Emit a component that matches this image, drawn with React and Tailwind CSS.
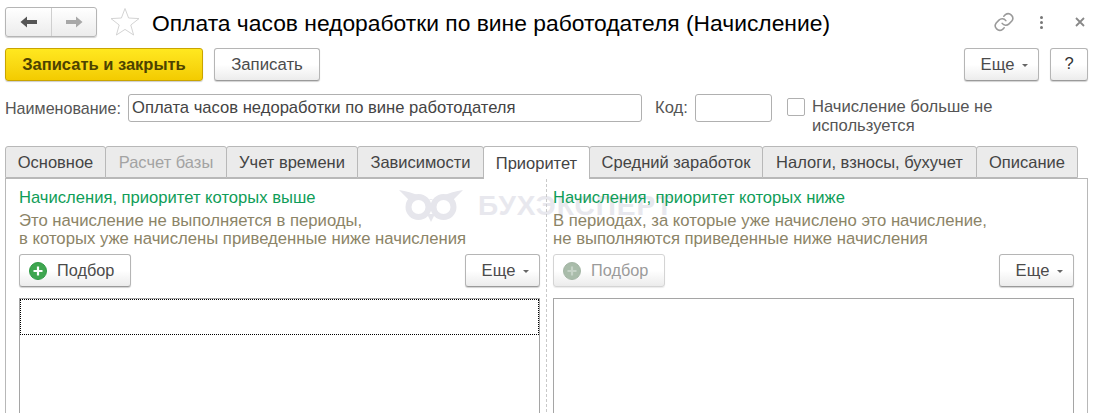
import React from "react";

const btn = "flex items-center justify-center rounded-[3px] border border-[#b5b5b5] border-b-[#9a9a9a] bg-gradient-to-b from-white via-white to-[#ececec] shadow-[0_1px_1px_rgba(0,0,0,0.18)] text-[#4b4b4b]";

function Caret() {
  return <span className="ml-[8px] mt-[1px] h-0 w-0 border-x-[3px] border-t-[3px] border-x-transparent border-t-[#666]" />;
}

function More({ className = "" }) {
  return (
    <div className={`${btn} h-[33px] w-[75px] pl-[6px] pt-[1px] text-[16.6px] ${className}`}>
      Еще
      <Caret />
    </div>
  );
}

function Plus({ disabled }) {
  return (
    <svg width="18" height="18" viewBox="0 0 18 18" className="shrink-0">
      <circle cx="9" cy="9" r="8.5" fill={disabled ? "#a9bcaa" : "#3fa650"} stroke={disabled ? "#a3b5a4" : "#2f9a45"} />
      <path d="M9 4.5v9M4.5 9h9" stroke={disabled ? "#c6d3c7" : "#fff"} strokeWidth="2.2" />
    </svg>
  );
}

function Pick({ disabled }) {
  return (
    <div
      className={`flex h-[33px] w-[112px] items-center gap-[10px] rounded-[3px] border pl-[9px] text-[16.3px] bg-gradient-to-b from-white via-white to-[#ececec] ${
        disabled
          ? "border-[#d4d4d4] text-[#9b9b9b] shadow-[0_1px_1px_rgba(0,0,0,0.08)]"
          : "border-[#b5b5b5] border-b-[#9a9a9a] text-[#4b4b4b] shadow-[0_1px_1px_rgba(0,0,0,0.18)]"
      }`}
    >
      <Plus disabled={disabled} />
      Подбор
    </div>
  );
}

const tabs = [
  ["Основное", 101],
  ["Расчет базы", 122, "disabled"],
  ["Учет времени", 132],
  ["Зависимости", 127],
  ["Приоритет", 107, "active"],
  ["Средний заработок", 174],
  ["Налоги, взносы, бухучет", 215],
  ["Описание", 102],
];

function Column({ title, lines, disabled, focused, right }) {
  return (
    <div className={`flex min-w-0 flex-col ${right ? "w-[534px] pl-[6px]" : "w-[540px] pl-[13px]"} pt-[9px]`}>
      <div className="h-[20px] text-[16.6px] leading-[20px] text-[#0f9d58]">{title}</div>
      <div className="mt-[4px] text-[16.7px] leading-[18px] text-[#8c8467]">
        {lines.map((l) => (
          <div key={l} className="whitespace-nowrap">{l}</div>
        ))}
      </div>
      <div className="mt-[6px] flex w-[521px] justify-between">
        <Pick disabled={disabled} />
        <More />
      </div>
      <div className="mt-[11px] h-[200px] w-[521px] border border-[#a5a5a5] bg-white">
        {focused && <div className="h-[36px] border border-dotted border-black" />}
      </div>
    </div>
  );
}

export default function App() {
  return (
    <div className="h-[413px] w-[1094px] overflow-hidden bg-white font-['Liberation_Sans',Arial,sans-serif] text-[#333]">
      <div className="flex h-[48px] items-start pl-[5px] pt-[7px] pr-[6px]">
        <div className="flex h-[30px] w-[92px] rounded-[3px] border border-[#b5b5b5] bg-gradient-to-b from-white to-[#ececec] shadow-[0_1px_1px_rgba(0,0,0,0.18)]">
          <div className="flex w-[46px] items-center justify-center border-r border-[#cfcfcf]">
            <svg width="18" height="14" viewBox="0 0 18 14"><path d="M0.5 7 7 1.5V5h10v4H7v3.5z" fill="#555" /></svg>
          </div>
          <div className="flex flex-1 items-center justify-center">
            <svg width="18" height="14" viewBox="0 0 18 14"><path d="M17.5 7 11 1.5V5H1v4h10v3.5z" fill="#a8a8a8" /></svg>
          </div>
        </div>
        <svg width="30" height="30" viewBox="0 0 30 30" className="ml-[13px]">
          <path d="M15 1.5 18.6 11 29 11.6 20.8 18 23.6 28 15 22.4 6.4 28 9.2 18 1 11.6 11.4 11z" fill="#fff" stroke="#d4d4d4" />
        </svg>
        <div className="ml-[12px] mt-[1px] whitespace-nowrap text-[22.83px] leading-[30px] text-black">
          Оплата часов недоработки по вине работодателя (Начисление)
        </div>
        <div className="ml-auto flex items-center pt-[4px]">
          <svg width="22" height="22" viewBox="0 0 24 24" fill="none" stroke="#9a9a9a" strokeWidth="1.7" strokeLinecap="round">
            <path d="M10 13.5a5 5 0 0 0 7.5.5l3-3a5 5 0 0 0-7-7l-1.7 1.7" />
            <path d="M14 10.5a5 5 0 0 0-7.5-.5l-3 3a5 5 0 0 0 7 7l1.7-1.7" />
          </svg>
          <div className="ml-[25px] flex flex-col gap-[2px]">
            <span className="h-[3px] w-[3px] rounded-full bg-[#777]" />
            <span className="h-[3px] w-[3px] rounded-full bg-[#777]" />
            <span className="h-[3px] w-[3px] rounded-full bg-[#777]" />
          </div>
          <svg width="10" height="10" viewBox="0 0 10 10" className="ml-[32px] mr-[3px]">
            <path d="M1 1l8 8M9 1l-8 8" stroke="#888" strokeWidth="1.8" />
          </svg>
        </div>
      </div>

      <div className="flex h-[33px] pl-[5px] pr-[6px]">
        <div className="flex w-[198px] items-center justify-center rounded-[3px] border border-[#c9a400] bg-gradient-to-b from-[#ffe81f] to-[#f3cb00] text-[16.5px] font-bold text-[#4d4300] shadow-[0_1px_1px_rgba(0,0,0,0.2)]">
          Записать и закрыть
        </div>
        <div className={`${btn} ml-[11px] w-[106px] text-[16.8px]`}>Записать</div>
        <More className="ml-auto" />
        <div className={`${btn} ml-[11px] h-[33px] w-[38px] text-[16.6px] text-[#333]`}>?</div>
      </div>

      <div className="mt-[13px] flex h-[52px] items-start pl-[5px] text-[16.6px]">
        <span className="mt-[4px] w-[123px] whitespace-nowrap text-[16.1px] leading-[20px] text-[#555]">Наименование:</span>
        <div className="flex h-[28px] w-[514px] items-center rounded-[3px] border border-[#b0b0b0] pl-[3px] text-[#444]">
          Оплата часов недоработки по вине работодателя
        </div>
        <span className="ml-[13px] mt-[4px] w-[40px] leading-[20px] text-[#555]">Код:</span>
        <div className="h-[28px] w-[77px] rounded-[3px] border border-[#b0b0b0]" />
        <div className="ml-[15px] mt-[4px] h-[18px] w-[18px] rounded-[2px] border border-[#b0b0b0]" />
        <div className="ml-[7px] mt-[3px] w-[240px] text-[16.6px] leading-[19px] text-[#555]">
          Начисление больше не используется
        </div>
      </div>

      <div className="flex h-[32px] pl-[5px]">
        {tabs.map(([label, w, state]) => (
          <div
            key={label}
            style={{ width: w }}
            className={`relative -mr-px flex shrink-0 items-center justify-center rounded-t-[3px] border border-[#b8b8b8] text-[16.5px] ${
              state === "active"
                ? "z-20 h-[33px] border-b-0 bg-white text-[#444]"
                : state === "disabled"
                ? "z-10 bg-[#ebebeb] text-[#a3a3a3]"
                : "z-10 bg-[#ebebeb] text-[#444]"
            }`}
          >
            {label}
          </div>
        ))}
      </div>

      <div className="relative ml-[5px] flex h-[300px] w-[1083px] border border-[#b8b8b8] bg-white">
        <div className="pointer-events-none absolute left-[392px] top-[10px] flex items-center gap-[14px]">
          <svg width="66" height="34" viewBox="0 0 66 34">
            <path d="M1 1 C8 2 15 4 22 7 L33 11 L44 7 C51 4 58 2 65 1 L56 10 L10 10z" fill="#e6e6ec" />
            <circle cx="20.5" cy="18" r="10" fill="none" stroke="#e6e6ec" strokeWidth="6" />
            <circle cx="45.5" cy="18" r="10" fill="none" stroke="#e6e6ec" strokeWidth="6" />
            <path d="M29 25h8l-4 8z" fill="#e6e6ec" />
          </svg>
          <span className="whitespace-nowrap text-[28px] font-bold leading-[34px] tracking-[1px] text-[#e8e8ee]">БУХЭКСПЕРТ</span>
        </div>
        <div className="relative flex">
          <Column
            focused
            title="Начисления, приоритет которых выше"
            lines={["Это начисление не выполняется в периоды,", "в которых уже начислены приведенные ниже начисления"]}
          />
          <div className="w-0 border-l border-dashed border-[#c9c9c9]" />
          <Column
            right
            disabled
            title="Начисления, приоритет которых ниже"
            lines={["В периодах, за которые уже начислено это начисление,", "не выполняются приведенные ниже начисления"]}
          />
        </div>
      </div>
    </div>
  );
}
